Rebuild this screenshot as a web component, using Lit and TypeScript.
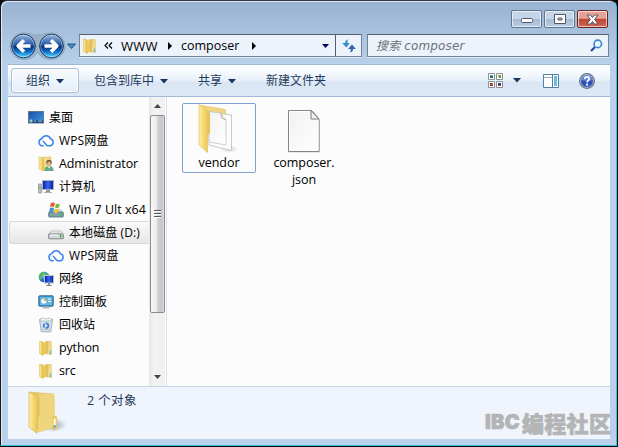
import { LitElement, html, svg, css, nothing } from "lit";
import { customElement } from "lit/decorators.js";
import { classMap } from "lit/directives/class-map.js";

const gradients = svg`<defs>
  <linearGradient id="fold" x2="1"><stop stop-color="#fff0a8"/><stop offset=".45" stop-color="#f4d873"/><stop offset="1" stop-color="#e5bd49"/></linearGradient>
  <linearGradient id="foldback" x2="1" y2=".3"><stop stop-color="#dfbd5a"/><stop offset="1" stop-color="#f7e59a"/></linearGradient>
  <linearGradient id="screen" x2="1" y2="1"><stop stop-color="#1b4da5"/><stop offset="1" stop-color="#3a9ae0"/></linearGradient>
  <linearGradient id="deep" x2="1"><stop stop-color="#0719a5"/><stop offset=".5" stop-color="#3a64ee"/><stop offset="1" stop-color="#0a1c9c"/></linearGradient>
  <linearGradient id="metal" x2="0" y2="1"><stop stop-color="#f5f5f5"/><stop offset="1" stop-color="#8d9292"/></linearGradient>
  <linearGradient id="paper" x2="1" y2="1"><stop stop-color="#f1f1f1"/><stop offset="1" stop-color="#fff"/></linearGradient>
  <radialGradient id="globe" cx=".35" cy=".3"><stop stop-color="#9fe0ff"/><stop offset="1" stop-color="#126cbd"/></radialGradient>
  <radialGradient id="shade"><stop stop-color="#8b93a5" stop-opacity=".8"/><stop offset="1" stop-color="#8b93a5" stop-opacity="0"/></radialGradient>
</defs>`;

const flag = svg`<path d="M3 1q2-1 4 0l-1 4q-2-1-4 0z" fill="#e6562c"/><path d="M8 1.500q2 1 4 0l-1 4q-2 1-4 0z" fill="#7db93b"/><path d="M2 6q2-1 4 0l-1 4q-2-1-4 0z" fill="#3f8fdd"/><path d="M7 6.500q2 1 4 0l-1 4q-2 1-4 0z" fill="#f5c32f"/>`;

const icons: Record<string, unknown> = {
  desktop: svg`<rect x=".5" y="1.500" width="15" height="11.500" fill="url(#screen)" stroke="#5c7897"/><path d="M1 10h14v3H1z" fill="#28508b"/><circle cx="3" cy="11" r="1.700" fill="#6fc0ce"/><circle cx="3.500" cy="10.500" r=".7" fill="#e5e66b"/><path d="M10 11h4M6 11h2" stroke="#96c1e6"/>`,
  cloud: svg`<path d="M5.200 12.800H4.300A3.600 3.600 0 0 1 3.800 5.700A4.600 4.600 0 0 1 12.500 5.800A3.600 3.600 0 0 1 12.200 12.800H9.800C8 12.800 7.200 9.800 5.300 8.200" fill="none" stroke="#3b82ee" stroke-width="1.500" stroke-linecap="round"/>`,
  user: svg`<path d="M1 1l5 1v13l-5-2z" fill="url(#fold)" stroke="#d8b858" stroke-width=".6"/><path d="M5 1h8v13H6z" fill="#f2dc88" stroke="#d4b65c" stroke-width=".6"/><circle cx="11" cy="6.500" r="2.700" fill="#765637"/><circle cx="11" cy="7.500" r="1.900" fill="#e0b088"/><path d="M6.500 15q0-5 4.500-5t4.500 5z" fill="#68a78a"/><path d="M9.500 10.500l1.500 2 1.500-2z" fill="#edf5ef"/>`,
  computer: svg`<rect x=".7" y="5" width="2.600" height="9" fill="#b8bfc2" stroke="#727c80" stroke-width=".6"/><path d="M1.300 8.500h1.400" stroke="#37b53b" stroke-width="1.500"/><rect x="4.500" y="1.500" width="11" height="9" fill="url(#deep)" stroke="#adb4be"/><path d="M8 11h4v2H8z" fill="#8d969b"/><path d="M6 13h8v1H6z" fill="#adb4b7"/>`,
  drive: svg`<path d="M3 6h10l2.500 3.500v4H.5v-4z" fill="url(#metal)" stroke="#939797" stroke-width=".6"/><rect x=".7" y="9" width="14.600" height="4.800" rx="1.200" fill="#d7dada" stroke="#757a7a" stroke-width=".8"/><path d="M2 10h8" stroke="#f9f9f9"/><rect x="12" y="10" width="1.500" height="2.500" fill="#18b92d"/>`,
  windrive: svg`<path d="M3 7h10l2.500 3v5H.5v-5z" fill="#d4dada"/><rect x=".7" y="10" width="14.600" height="5" rx="1" fill="#7fa1a9" stroke="#4f6e77" stroke-width=".8"/><rect x="12" y="11.500" width="1.500" height="2" fill="#26c83b"/>${flag}`,
  network: svg`<circle cx="6" cy="6" r="5.300" fill="url(#globe)"/><path d="M1 5q2-5 6-4Q5 3 5 5q-2 1-2 4Q1 8 1 5zM7 3l3-1 1 3-3 1z" fill="#58b84e"/><rect x="6.500" y="4.500" width="9" height="7.500" fill="url(#deep)" stroke="#bac2ce"/><path d="M10 12h2v2h2v1H8v-1h2z" fill="#858f96"/>`,
  panel: svg`<rect x=".7" y="1.700" width="14.600" height="10.600" rx="1" fill="#3391cb" stroke="#54799c"/><rect x="2" y="3" width="12" height="8" fill="#62b8e3"/><circle cx="5.800" cy="7" r="2.600" fill="#fff"/><path d="M5.800 7V4.400A2.600 2.600 0 0 1 8.400 7z" fill="#f0a33a"/><path d="M10 5h3M10 7.500h3" stroke="#fff"/><path d="M6 12.500h4l2 2H4z" fill="#aeb5bb"/>`,
  bin: svg`<path d="M1.500 2.500h13l-1.700 12.300H3.200z" fill="#d5e1e9" stroke="#8fa4b2" stroke-width=".8"/><path d="M2 2l3-1 3 1 3-1 3 1-1 2H3z" fill="#f4f8fa" stroke="#93a6b1" stroke-width=".6"/><circle cx="8" cy="8.700" r="2.300" fill="none" stroke="#3d7edb" stroke-width="1.700" stroke-dasharray="3.800 1"/><path d="M4 12l8 1" stroke="#b0c4d1"/>`,
  folder: svg`<path d="M7.500 1.500h5.700l.5 13-6.200-.7z" fill="url(#foldback)" stroke="#dbb955" stroke-width=".5"/><path d="M1.500 1l3.500.8v13.700l-3.500-2z" fill="url(#fold)" stroke="#d8b249" stroke-width=".5"/><path d="M5 3l4-1.500v11L5 15.500z" fill="#e9c95d"/><path d="M9 1.500v12" stroke="#cba640" stroke-width=".6"/><rect x="11.800" y="10.500" width="1.300" height="3.500" fill="#6db3e4"/>`,
};

const icon = (name: string) => html`<svg class="icon" width="16" height="16" viewBox="0 0 16 16">${gradients}${icons[name]}</svg>`;
const caret = () => html`<svg class="caret" width="8" height="5" viewBox="0 0 8 5"><path d="M0 0h8L4 4.500z" fill="#17365f"/></svg>`;
interface TreeNode { icon: string; label: string; level: number; cls: string; selected?: boolean }

const tree: TreeNode[] = [
  { icon: "desktop", label: "桌面", level: 0, cls: "cjk" },
  { icon: "cloud", label: "WPS网盘", level: 1, cls: "wps" },
  { icon: "user", label: "Administrator", level: 1, cls: "admin" },
  { icon: "computer", label: "计算机", level: 1, cls: "cjk" },
  { icon: "windrive", label: "Win 7 Ult x64", level: 2, cls: "win" },
  { icon: "drive", label: "本地磁盘 (D:)", level: 2, cls: "disk", selected: true },
  { icon: "cloud", label: "WPS网盘", level: 2, cls: "wps" },
  { icon: "network", label: "网络", level: 1, cls: "cjk" },
  { icon: "panel", label: "控制面板", level: 1, cls: "cjk" },
  { icon: "bin", label: "回收站", level: 1, cls: "cjk" },
  { icon: "folder", label: "python", level: 1, cls: "plain" },
  { icon: "folder", label: "src", level: 1, cls: "plain" },
  { icon: "folder", label: "", level: 1, cls: "" },
];

@customElement("app-root")
export class AppRoot extends LitElement {
  static styles = css`
    :host { display: block; width: 618px; height: 447px; background: #080a0c; font: 13px/16px "Open Sans", "Noto Sans CJK SC", sans-serif; color: #000; overflow: hidden; }
    * { box-sizing: border-box; }
    svg { display: block; flex: none; }
    .window { position: relative; width: 617px; height: 446px; padding: 0 7px 6px; border: 1px solid #30c5df; border-top-color: #36353e; border-left-color: #17191d; border-radius: 7px 7px 0 0; background: linear-gradient(#98b2d1 0, #a4bedb 24px, #b9d1ea 64px, #b9d1ea); box-shadow: inset 1px 1px #dcecf8; display: flex; flex-direction: column; }
    .caption { height: 32px; flex: none; display: flex; justify-content: flex-end; gap: 2px; padding: 9px 1px 0 0; }
    .cap { width: 31px; height: 18px; border: 1px solid #62758f; border-radius: 2px; box-shadow: inset 0 0 0 1px #ffffff99; background: linear-gradient(#c4d5e8 0 48%, #a4bad3 50%, #b9cde3); display: grid; place-items: center; }
    .minimise { padding-top: 4px; }
    .close { border-color: #66242b; background: linear-gradient(#e7a297 0 46%, #bf4432 50%, #ce6c54); }
    .nav { height: 31px; flex: none; display: flex; padding-top: 1px; }
    .history { margin-top: -2px; }
    .address, .search { flex: none; height: 23px; border: 1px solid #72839a; border-top-color: #555f6b; background: #ecf3fb; display: flex; align-items: center; box-shadow: 0 1px #dceafa; }
    .address { width: 283px; }
    .address .icon { margin: 0 6px 0 2px; }
    .crumb { white-space: pre; }
    .www { width: 47px; margin-left: 8px; letter-spacing: .2px; }
    .comp { margin-left: 9px; width: 71px; font-size: 12.500px; }
    .grow { flex: 1; }
    .refresh { width: 26px; height: 21px; border-left: 1px solid #555f6b; margin-left: 6px; display: grid; place-items: center; }
    .search { width: 242px; margin-left: 5px; padding: 0 5px 0 8px; justify-content: space-between; color: #6f7276; font-style: italic; }
    .query { font: italic 12px/16px "DejaVu Sans", "Noto Sans CJK SC", sans-serif; letter-spacing: .15px; white-space: pre; }
    .client { width: 602px; height: 375px; flex: none; display: flex; flex-direction: column; background: #fcfcfc; }
    .toolbar { height: 33px; flex: none; border-top: 1px solid #a0b8d2; border-bottom: 1px solid #a4b9d5; background: linear-gradient(#fff 0, #f3f8fd 30%, #e6effa 50%, #dae6f4 55%, #dce8f5); display: flex; align-items: center; color: #1e395b; font-size: 12px; padding: 0 15px 0 3px; }
    .tool { display: flex; align-items: center; gap: 6px; white-space: nowrap; }
    .organize { width: 68px; height: 25px; border: 1px solid #a9bfda; border-radius: 3px; box-shadow: inset 0 0 0 1px #fff; padding-left: 14px; background: linear-gradient(#f8fbfe, #e4edf8); }
    .include { margin-left: 15px; width: 104px; }
    .share { width: 68px; }
    .caret { margin-top: 1px; }
    .viewcaret { margin-left: 10px; }
    .preview { margin-left: 22px; }
    .help { margin-left: 20px; }
    .main { height: 289px; flex: none; display: flex; }
    .tree { width: 141px; flex: none; padding-top: 9px; overflow: hidden; }
    .row { height: 23px; display: flex; align-items: center; gap: 5px; white-space: pre; padding-left: 20px; border: 1px solid transparent; border-right: 0; }
    .row .icon { margin-left: -1px; }
    .l1 { padding-left: 30px; }
    .l2 { padding-left: 40px; }
    .selected { margin-left: 1px; padding-left: 39px; border-color: #d8d8d8; border-radius: 3px 0 0 3px; background: linear-gradient(#fafafa, #e6e6e6); }
    .cjk { font-size: 12px; }
    .wps { font-size: 12px; letter-spacing: .15px; }
    .disk { font-size: 12px; letter-spacing: .1px; }
    .admin { font-size: 12.500px; letter-spacing: -.12px; }
    .win { font-size: 12.500px; }
    .plain { font-size: 12.500px; letter-spacing: -.15px; }
    .scroll { width: 17px; flex: none; background: linear-gradient(90deg, #e8e8e8, #f2f2f2 30%, #f0f0f0); display: flex; flex-direction: column; align-items: center; border-right: 1px solid #fff; }
    .sarrow { height: 18px; display: grid; place-items: center; }
    .thumb { width: 15px; height: 198px; border: 1px solid #898b8f; border-radius: 2px; background: linear-gradient(90deg, #f7f7f7 0, #eeeeef 40%, #cccdd0 55%, #c6c7cb 85%, #dedfe2); display: grid; place-items: center; }
    .track { height: 55px; }
    .files { width: 444px; border-left: 1px solid #d2e2f2; display: flex; padding: 6px 0 0 15px; gap: 11px; text-align: center; }
    .file { width: 74px; height: 70px; display: flex; flex-direction: column; align-items: center; border: 1px solid transparent; line-height: 17px; }
    .focused { border-color: #7da2ce; border-radius: 2px; }
    .name { font-size: 12.500px; letter-spacing: -.05px; }
    .status { height: 53px; border-top: 1px solid #c7d5e6; background: #f0f4fc; color: #1e395b; display: flex; padding-left: 16px; }
    .count { margin: 6px 0 0 11px; font-size: 12.500px; letter-spacing: .4px; }
    .mark { position: absolute; left: 484px; top: 407px; color: #b4b4b6; -webkit-text-stroke: .7px #b4b4b6; white-space: nowrap; display: flex; align-items: center; }
    .latin { width: 37px; font: 900 20px/28px "Inter", sans-serif; letter-spacing: .3px; }
    .zh { font: 900 22px/28px "Noto Sans CJK SC", sans-serif; letter-spacing: .3px; }
  `;

  render() {
    return html`<div class="window">
      <div class="caption">
        <div class="cap minimise"><svg width="12" height="6"><rect x=".5" y=".5" width="11" height="4" rx="1" fill="#fff" stroke="#535666"/></svg></div>
        <div class="cap"><svg width="12" height="10"><path d="M.5.5h11v9H.5zM4 4v2h4V4z" fill="#fff" fill-rule="evenodd" stroke="#535666"/></svg></div>
        <div class="cap close"><svg width="13" height="11" viewBox="0 0 13 11"><path d="M1 1h3.500l2 2.500 2-2.500H12L8.700 5.500 12 10H8.500l-2-2.500-2 2.500H1l3.300-4.500z" fill="#fff" stroke="#555261"/></svg></div>
      </div>
      <div class="nav">
        <svg class="history" width="71" height="29" viewBox="0 0 71 29">
          <defs><linearGradient id="ball" x2="0" y2="1"><stop stop-color="#9db6da"/><stop offset=".35" stop-color="#3c6fb3"/><stop offset=".49" stop-color="#1b4c9b"/><stop offset=".52" stop-color="#052e79"/><stop offset=".75" stop-color="#1171cc"/><stop offset="1" stop-color="#58e6ff"/></linearGradient></defs>
          <path d="M2 14A13.500 13.500 0 0 1 15.500 1Q22 1 26 3H33Q37 1 43.500 1A13.500 13.500 0 0 1 57 14A13.500 13.500 0 0 1 43.500 27.500Q34 27.500 29.500 20Q25 27.500 15.500 27.500A13.500 13.500 0 0 1 2 14z" fill="#9bb1ca" stroke="#8fa6c0"/>
          <circle cx="15.500" cy="14" r="11.800" fill="url(#ball)" stroke="#17386b"/><circle cx="43.500" cy="14" r="11.800" fill="url(#ball)" stroke="#17386b"/>
          <circle cx="15.500" cy="14" r="10.800" fill="none" stroke="#ffffff66"/><circle cx="43.500" cy="14" r="10.800" fill="none" stroke="#ffffff66"/>
          <g fill="none" stroke="#fff" stroke-width="3.600" stroke-linejoin="round"><path d="M22.500 14h-12M16 8.200L10.200 14l5.800 5.800M36.500 14h12M43 8.200l5.800 5.800-5.800 5.800"/></g>
          <path d="M59.500 12h8l-4 4.500z" fill="#3c95d2" stroke="#23547f"/>
        </svg>
        <div class="address">${icon("folder")}
          <svg width="9" height="7"><path d="M4 .5L1 3.500l3 3M8 .5l-3 3 3 3" fill="none" stroke="#000" stroke-width="1.200"/></svg>
          <span class="crumb www">WWW</span>
          <svg width="4" height="8"><path d="M0 0l4 4-4 4z"/></svg>
          <span class="crumb comp">composer</span>
          <svg width="4" height="8"><path d="M0 0l4 4-4 4z"/></svg>
          <span class="grow"></span>
          <svg width="7" height="4"><path d="M0 0h7L3.500 4z" fill="#000066"/></svg>
          <div class="refresh"><svg width="14" height="14" viewBox="0 0 14 14"><path d="M6 .5Q3 1 3 4H.2l4 4.500L8 4H5.500Q5.300 2 6 .5z" fill="#3590cd"/><path d="M8 13.500q3-.5 3-3.500h2.800L10 5.500 6 10h2.700Q9 12 8 13.500z" fill="#3360ad"/></svg></div>
        </div>
        <div class="search"><span class="query">搜索 composer</span><svg width="13" height="13" viewBox="0 0 13 13"><path d="M5 8L1 12" stroke="#234f9f" stroke-width="2.300"/><circle cx="7.800" cy="4.900" r="3.700" fill="#f4faff" stroke="#3b86c8" stroke-width="1.700"/></svg></div>
      </div>
      <div class="client">
        <div class="toolbar">
          <div class="tool organize">组织 ${caret()}</div>
          <div class="tool include">包含到库中 ${caret()}</div>
          <div class="tool share">共享 ${caret()}</div>
          <div class="tool">新建文件夹</div><span class="grow"></span>
          <svg width="15" height="15" viewBox="0 0 15 15"><g fill="#fff" stroke="#8b9199"><path d="M.5.5h6v6h-6zM8.500.5h6v6h-6zM.5 8.500h6v6h-6zM8.500 8.500h6v6h-6z"/></g><path d="M2 2h3v1H2z" fill="#4ca8d3"/><path d="M2 3h3v2H2z" fill="#23723f"/><path d="M10 2h3v3h-2z" fill="#4b9e2f"/><path d="M11 2h2v1h-2z" fill="#e57824"/><path d="M2 10h3v3H2z" fill="#85251c"/><path d="M2 12l3-2v2z" fill="#e78022"/><path d="M10 10h3v3h-3z" fill="#203e85"/><path d="M10 12h3v1h-3z" fill="#cc4630"/></svg>
          <svg width="8" height="5" viewBox="0 0 8 5" class="viewcaret"><path d="M0 0h8L4 4.500z" fill="#17365f"/></svg>
          <svg width="16" height="14" class="preview"><path d="M.5.5h15v13H.5z" fill="#fff" stroke="#5380a5"/><path d="M1 3.500h9" stroke="#91abc5"/><path d="M9.500 1v12" stroke="#5380a5"/><path d="M11 2h3v10h-3z" fill="#68bedc"/></svg>
          <svg width="16" height="16" class="help" viewBox="0 0 16 16"><circle cx="8" cy="8" r="7.300" fill="#2b52b6" stroke="#686f80" stroke-width="1.200"/><path d="M2 7a6 6 0 0 1 12 0Q8 9 2 7z" fill="#5f83d2"/><circle cx="8" cy="8" r="6.400" fill="none" stroke="#c5cad8" stroke-width=".8"/><path d="M5.700 6.100Q5.800 3.800 8 3.800T10.200 5.900C10.200 7.500 8.100 7.300 8.100 9.400" fill="none" stroke="#fff" stroke-width="1.700"/><circle cx="8.100" cy="11.700" r="1.100" fill="#fff"/></svg>
        </div>
        <div class="main">
          <div class="tree">${tree.map((n) => html`<div class=${classMap({ row: true, l1: n.level === 1, l2: n.level === 2, selected: !!n.selected })}>${icon(n.icon)}${n.label ? html`<span class=${n.cls}>${n.label}</span>` : nothing}</div>`)}</div>
          <div class="scroll">
            <div class="sarrow"><svg width="7" height="4"><path d="M0 4h7L3.500 0z" fill="#444"/></svg></div>
            <div class="thumb"><svg width="7" height="8"><path d="M0 .5h7M0 3.500h7M0 6.500h7" stroke="#555"/><path d="M0 1.500h7M0 4.500h7M0 7.500h7" stroke="#fff"/></svg></div>
            <div class="track"></div>
            <div class="sarrow"><svg width="7" height="4"><path d="M0 0h7L3.500 4z" fill="#444"/></svg></div>
          </div>
          <div class="files">
            <div class="file focused"><svg width="44" height="50" viewBox="0 0 44 50">${gradients}
              <ellipse cx="32" cy="45" rx="9" ry="4" fill="url(#shade)" opacity=".5"/>
              <path d="M2 1l26.500 4.500V12L12 10z" fill="#f0d681" stroke="#dbb94f" stroke-width=".5"/>
              <path d="M12 8l22.500 3v35.500L12 41z" fill="#fdfdfd" stroke="#bcbcbc" stroke-width=".8"/>
              <path d="M12 7.500l12 1.500 5 7v25L12 38z" fill="url(#paper)" stroke="#bbb" stroke-width=".7"/><path d="M24 9q0 4 1 5l4 2" fill="#eee" stroke="#999" stroke-width=".8"/>
              <path d="M2 1l9 6q1.500 1 1.500 4v18l-2 2v17.500L2 41z" fill="url(#fold)" stroke="#dfbd59" stroke-width=".6"/>
            </svg><span class="name">vendor</span></div>
            <div class="file"><svg width="34" height="50" viewBox="0 0 34 50">${gradients}
              <path d="M2 7h24l7 9v32.500H2z" fill="#d4d4d4"/><path d="M1.500 6.500h23l7.500 8.500v32.500H1.500z" fill="url(#paper)" stroke="#858585"/><path d="M2.500 7.500h21V15H31v31.500H2.500z" fill="none" stroke="#fff"/><path d="M24 6.500V15h8z" fill="#f4f4f4" stroke="#777"/>
            </svg><span class="name">composer.<br>json</span></div>
          </div>
        </div>
        <div class="status"><svg width="52" height="50" viewBox="0 0 52 50">${gradients}
            <ellipse cx="29" cy="38" rx="14" ry="7" fill="url(#shade)"/>
            <path d="M5 5l25 2 .5 33-16 5z" fill="url(#foldback)" stroke="#dcb855" stroke-width=".6"/>
            <path d="M14 10l16-3 .5 32-16 6z" fill="#efd67c"/>
            <path d="M5 5l8.500 4q1.500 1 1.500 4v16l-1.500 2-.5 15.500L5 40z" fill="url(#fold)" stroke="#d9b74f" stroke-width=".7"/>
            <path d="M29 30l3-1 1 2v11l-4 1z" fill="#efcf67" stroke="#dcb54c" stroke-width=".5"/><path d="M29.700 32l1.800-.5v8l-1.800.5z" fill="#fff"/><path d="M29.700 38h1.800v3h-1.800z" fill="#43a2df"/>
          </svg><span class="count">2 个对象</span></div>
      </div>
      <div class="mark"><span class="latin">IBC</span><span class="zh">编程社区</span></div>
    </div>`;
  }
}
